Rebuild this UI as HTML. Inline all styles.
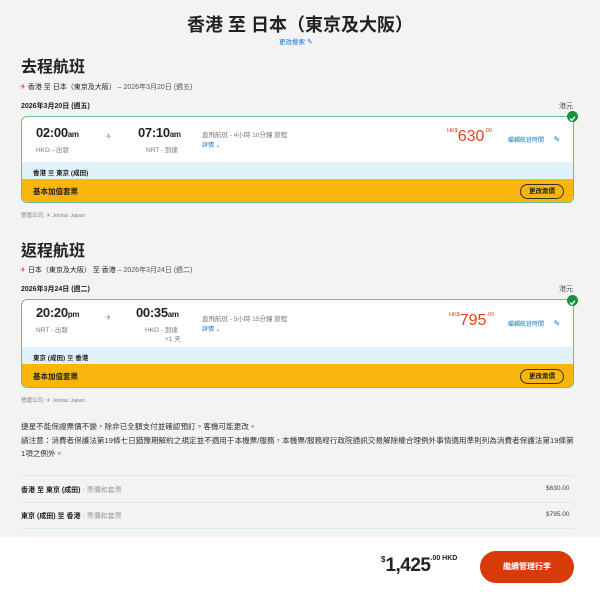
<!DOCTYPE html>
<html><head><meta charset="utf-8"><style>
*{margin:0;padding:0;box-sizing:border-box}
body{width:600px;height:595px;background:#f3f3f3;font-family:"Liberation Sans","Noto Sans CJK TC",sans-serif;color:#222;position:relative;overflow:hidden}
.a{position:absolute;white-space:nowrap}
.card{position:absolute;left:21px;width:553px;border:1.5px solid #6cc08a;border-radius:6px;background:#fff;overflow:hidden}
.blue{position:absolute;left:0;right:0;background:#e1f1fa}
.yel{position:absolute;left:0;right:0;bottom:0;background:#f9b50b}
.t{font-size:13px;font-weight:bold;letter-spacing:-0.3px}
.t small{font-size:8px}
.g{font-size:6.5px;color:#777}
.chk{position:absolute;width:11px;height:11px;border-radius:50%;background:#17903f;left:567px}
.btn{position:absolute;left:498px;width:44px;height:15px;border:1px solid #333;border-radius:8px;font-size:6.5px;text-align:center;line-height:13px;font-weight:bold}
.hr{position:absolute;left:21px;width:553px;height:1px;background:#d6e8f3}
</style></head><body>
<div class="a" style="left:0;width:600px;text-align:center;top:11px;font-size:18px;font-weight:bold">香港 至 日本（東京及大阪）</div>
<div class="a" style="left:279px;top:36px;font-size:6.5px;color:#1a73c9">更改搜索 <span style="font-size:7px">✎</span></div>

<div class="a" style="left:21px;top:53px;font-size:16px;font-weight:bold">去程航班</div>
<div class="a" style="left:20px;top:82px;font-size:7px"><span style="color:#e8401c">✈</span> 香港 至 日本（東京及大阪） <span style="color:#555">– 2026年3月20日 (週五)</span></div>
<div class="a" style="left:21px;top:101px;font-size:7px;font-weight:bold">2026年3月20日 (週五)</div>
<div class="a" style="left:559px;top:101px;font-size:7px;color:#555">港元</div>
<div class="card" style="top:116px;height:87px">
 <div class="blue" style="top:45px;height:18px"></div>
 <div class="yel" style="height:23px"></div>
 <div class="a t" style="left:14px;top:8px">02:00<small>am</small></div>
 <div class="a g" style="left:14px;top:27px">HKG - 出發</div>
 <div class="a" style="left:83px;top:15px;font-size:8px;color:#999">✈</div>
 <div class="a t" style="left:116px;top:8px">07:10<small>am</small></div>
 <div class="a g" style="left:124px;top:27px">NRT - 到達</div>
 <div class="a g" style="left:180px;top:12px">直飛航班 - 4小時 10分鐘 旅程</div>
 <div class="a" style="left:180px;top:23px;font-size:6px;color:#1a73c9">詳情 ⌄</div>
 <div class="a" style="left:425px;top:11px;color:#e8401c"><span style="font-size:5.5px;vertical-align:top">HK$</span><span style="font-size:16px">630</span><span style="font-size:5.5px;vertical-align:top">.00</span></div>
 <div class="a" style="left:486px;top:18px;font-size:6px;color:#1a73c9">編輯航班時間 <span style="margin-left:8px;font-size:8px">✎</span></div>
 <div class="a" style="left:11px;top:50px;font-size:6.5px;font-weight:bold">香港 <span style="font-weight:normal">至</span> 東京 (成田)</div>
 <div class="a" style="left:11px;top:69px;font-size:7.5px;font-weight:bold">基本加值套票</div>
 <div class="btn" style="top:67px">更改票價</div>
</div>
<div class="chk" style="top:111px"><svg width="11" height="11"><path d="M3 5.6L4.8 7.3 8 3.8" stroke="#fff" stroke-width="1.4" fill="none"/></svg></div>
<div class="a" style="left:21px;top:211px;font-size:5.5px;color:#888">營運公司: ✈ Jetstar Japan</div>

<div class="a" style="left:21px;top:237px;font-size:16px;font-weight:bold">返程航班</div>
<div class="a" style="left:20px;top:265px;font-size:7px"><span style="color:#e8401c">✈</span> 日本（東京及大阪） 至 香港 <span style="color:#555">– 2026年3月24日 (週二)</span></div>
<div class="a" style="left:21px;top:284px;font-size:7px;font-weight:bold">2026年3月24日 (週二)</div>
<div class="a" style="left:559px;top:284px;font-size:7px;color:#555">港元</div>
<div class="card" style="top:299px;height:89px">
 <div class="blue" style="top:47px;height:18px"></div>
 <div class="yel" style="height:23px"></div>
 <div class="a t" style="left:14px;top:5px">20:20<small>pm</small></div>
 <div class="a g" style="left:14px;top:24px">NRT - 出發</div>
 <div class="a" style="left:83px;top:13px;font-size:8px;color:#999">✈</div>
 <div class="a t" style="left:114px;top:5px">00:35<small>am</small></div>
 <div class="a g" style="left:123px;top:24px">HKG - 到達</div>
 <div class="a g" style="left:143px;top:33px">+1 天</div>
 <div class="a g" style="left:180px;top:13px">直飛航班 - 5小時 15分鐘 旅程</div>
 <div class="a" style="left:180px;top:24px;font-size:6px;color:#1a73c9">詳情 ⌄</div>
 <div class="a" style="left:427px;top:12px;color:#e8401c"><span style="font-size:5.5px;vertical-align:top">HK$</span><span style="font-size:16px">795</span><span style="font-size:5.5px;vertical-align:top">.00</span></div>
 <div class="a" style="left:486px;top:19px;font-size:6px;color:#1a73c9">編輯航班時間 <span style="margin-left:8px;font-size:8px">✎</span></div>
 <div class="a" style="left:11px;top:52px;font-size:6.5px;font-weight:bold">東京 (成田) <span style="font-weight:normal">至</span> 香港</div>
 <div class="a" style="left:11px;top:71px;font-size:7.5px;font-weight:bold">基本加值套票</div>
 <div class="btn" style="top:69px">更改票價</div>
</div>
<div class="chk" style="top:295px"><svg width="11" height="11"><path d="M3 5.6L4.8 7.3 8 3.8" stroke="#fff" stroke-width="1.4" fill="none"/></svg></div>
<div class="a" style="left:21px;top:396px;font-size:5.5px;color:#888">營運公司: ✈ Jetstar Japan</div>

<div class="a" style="left:21px;top:420px;font-size:7.6px;line-height:13.5px;color:#333">捷星不能保證票價不變，除非已全額支付並確認預訂。客機可能更改。<br>請注意：消費者保護法第19條七日猶豫期解約之規定並不適用于本機票/服務，本機票/服務經行政院通訊交易解除權合理例外事情適用準則列為消費者保護法第19條第<br>1項之例外。</div>
<div class="hr" style="top:475px"></div>
<div class="a" style="left:21px;top:485px;font-size:7px;font-weight:bold">香港 至 東京 (成田) <span style="font-weight:normal;color:#999">- 票價和套票</span></div>
<div class="a" style="left:546px;top:485px;font-size:6.5px;color:#444">$630.00</div>
<div class="hr" style="top:502px"></div>
<div class="a" style="left:21px;top:511px;font-size:7px;font-weight:bold">東京 (成田) 至 香港 <span style="font-weight:normal;color:#999">- 票價和套票</span></div>
<div class="a" style="left:546px;top:511px;font-size:6.5px;color:#444">$795.00</div>
<div class="hr" style="top:528px"></div>

<div style="position:absolute;left:0;top:537px;width:600px;height:58px;background:#fff"></div>
<div class="a" style="left:381px;top:555px;color:#222"><span style="font-size:8px;vertical-align:top;font-weight:bold">$</span><span style="font-size:19px;font-weight:bold;letter-spacing:-0.5px">1,425</span><span style="font-size:7px;vertical-align:top;font-weight:bold">.00 HKD</span></div>
<div class="a" style="left:480px;top:551px;width:94px;height:32px;border-radius:16px;background:#d93a0a;color:#fff;font-size:8px;font-weight:bold;text-align:center;line-height:32px">繼續管理行李</div>
</body></html>
